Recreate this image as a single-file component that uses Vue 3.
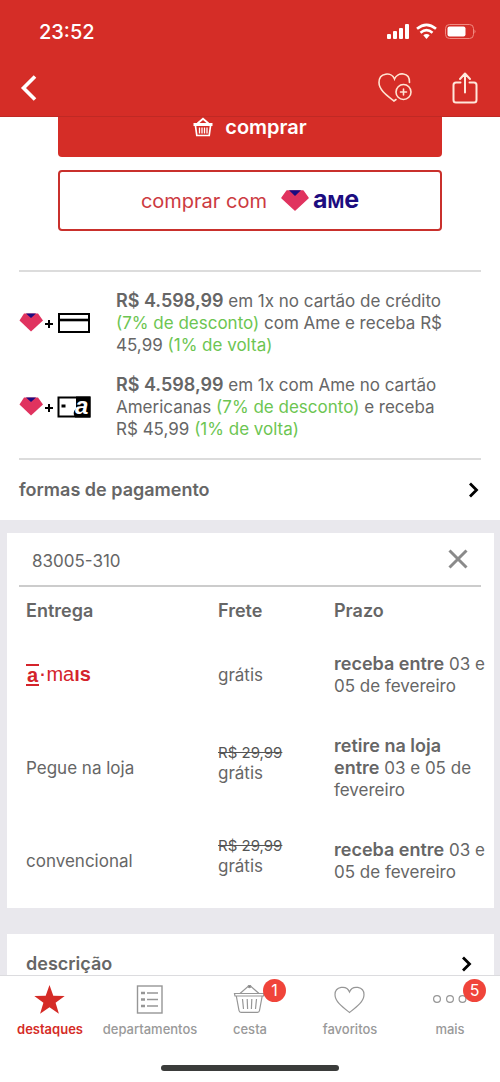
<script setup>
import { ref } from 'vue'

const cep = ref('83005-310')

const payments = [
  { id: 'credit', price: 'R$ 4.598,99', a: ' em 1x no cartão de crédito ', off: '(7% de desconto)', b: ' com Ame e receba R$ 45,99 ', back: '(1% de volta)' },
  { id: 'store', price: 'R$ 4.598,99', a: ' em 1x com Ame no cartão Americanas ', off: '(7% de desconto)', b: ' e receba R$ 45,99 ', back: '(1% de volta)' },
]

const deliveries = [
  { id: 'amais', name: '', old: '', strong: 'receba entre', rest: ' 03 e 05 de fevereiro' },
  { id: 'loja', name: 'Pegue na loja', old: 'R$ 29,99', strong: 'retire na loja entre', rest: ' 03 e 05 de fevereiro' },
  { id: 'conv', name: 'convencional', old: 'R$ 29,99', strong: 'receba entre', rest: ' 03 e 05 de fevereiro' },
]

const tabs = [
  { id: 'destaques', active: true },
  { id: 'departamentos' },
  { id: 'cesta', badge: 1 },
  { id: 'favoritos' },
  { id: 'mais', badge: 5 },
]
</script>

<template>
  <div class="app">
    <header class="top">
      <div class="status">
        <span class="time">23:52</span>
        <svg class="status-icons" width="90" height="18" viewBox="0 0 90 18" fill="#fff" aria-hidden="true">
          <rect x="1" y="11" width="4" height="5" rx="1" />
          <rect x="7" y="8" width="4" height="8" rx="1" />
          <rect x="13" y="5" width="4" height="11" rx="1" />
          <rect x="19" y="1" width="4" height="15" rx="1" />
          <g fill="none" stroke="#fff" stroke-width="2.6">
            <path d="M31 5.8Q40.500 -2.200 50 5.800" />
            <path d="M34.500 9.700Q40.500 4.600 46.500 9.700" />
          </g>
          <path d="M37.300 12.200Q40.500 9.600 43.700 12.200L40.500 16Z" />
          <rect x="59.500" y="1.500" width="28" height="14" rx="4" fill="none" stroke="#f08a80" />
          <rect x="61.500" y="3.500" width="18" height="10" rx="2" />
          <path d="M88.500 6.500q2 2 0 4z" fill="#f08a80" />
        </svg>
      </div>
      <div class="bar">
        <button class="icon-btn back" aria-label="voltar">
          <svg width="18" height="28" viewBox="0 0 18 28" fill="none" stroke="#fff" stroke-width="3.6"><path d="M16 2.500L4.500 14L16 25.500" /></svg>
        </button>
        <div class="bar-actions">
          <button class="icon-btn" aria-label="adicionar aos favoritos">
            <svg width="36" height="32" viewBox="0 0 36 32" fill="none" stroke="#ffe4d2" stroke-width="1.600" stroke-linecap="round">
              <path d="M31.500 10.500C32 0 19.500 -.5 16.500 7C13.500 -.5 1 .5 1 10.500C1 18 9 23.500 16 29L18 27.500" />
              <circle cx="25.500" cy="20" r="7.500" />
              <path d="M25.500 17v6M22.500 20h6" />
            </svg>
          </button>
          <button class="icon-btn" aria-label="compartilhar">
            <svg width="26" height="32" viewBox="0 0 26 32" fill="none" stroke="#ffe8dc" stroke-width="2" stroke-linecap="round" stroke-linejoin="round">
              <path d="M8.500 10.500H4q-2.500 0-2.500 2.500v15q0 2.500 2.500 2.500h18q2.500 0 2.500-2.500v-15q0-2.500-2.500-2.500h-4.500M13 20.500V2M8 7l5-5.500L18 7" />
            </svg>
          </button>
        </div>
      </div>
    </header>

    <main class="content">
      <section class="offer">
        <div class="buy">
          <button class="buy-btn">
            <svg width="20" height="20" viewBox="0 0 20 20" fill="none" stroke="#fff" aria-hidden="true">
              <path d="M4.500 6.500L10 1.800L15.500 6.500" stroke-width="1.800" />
              <path d="M0.500 6h19v3H.5z" fill="#fff" stroke="none" />
              <path d="M2.500 9l1.300 9.500h12.400L17.500 9" stroke-width="1.700" />
              <path d="M6.500 10.500v6M9 10.500v6M11.500 10.500v6M14 10.500v6" stroke-width="1.300" />
            </svg>
            comprar
          </button>
          <button class="ame-btn">
            <span>comprar com</span>
            <span class="ame-logo">
              <svg width="28" height="21" viewBox="0 0 28 21" aria-hidden="true">
                <path d="M6 1h16L27 8L14 20L1 8Z" fill="#e0335f" stroke="#e0335f" stroke-width="1.500" stroke-linejoin="round" />
                <path d="M8 .2h12L14 6Z" fill="#1c0c80" />
              </svg>
              <span class="ame-word">a<span class="ame-m">M</span>e</span>
            </span>
          </button>
        </div>

        <ul class="payments">
          <li v-for="p in payments" :key="p.id" class="payment">
            <svg width="72" height="24" viewBox="0 0 72 24" aria-hidden="true">
              <path d="M5 2.500h14L24 9.500L12 20.500L0.500 9.500Z" fill="#e0335f" />
              <path d="M7 2.500h10L12 7Z" fill="#1c0c80" />
              <path d="M30 9v8M26 13h8" stroke="#000" stroke-width="2" />
              <template v-if="p.id === 'credit'">
                <rect x="40" y="3" width="30" height="18" fill="#fff" stroke="#000" stroke-width="2" />
                <path d="M40 9h30" stroke="#000" stroke-width="2.600" />
              </template>
              <template v-else>
                <rect x="39.500" y="2.500" width="31" height="19" fill="#fff" stroke="#000" stroke-width="2" />
                <path d="M57 1.500h14.500v21H56q-3-5 1-9z" fill="#000" />
                <rect x="42.500" y="9.500" width="4" height="3" />
                <text x="56" y="19" class="card-a">a</text>
              </template>
            </svg>
            <p><strong>{{ p.price }}</strong>{{ p.a }}<span class="green">{{ p.off }}</span>{{ p.b }}<span class="green">{{ p.back }}</span></p>
          </li>
        </ul>

        <button class="link-row">
          formas de pagamento
          <svg width="12" height="18" viewBox="0 0 12 18" fill="none" stroke="#000" stroke-width="2.800"><path d="M1 2.500L7.500 9L1 15.500" /></svg>
        </button>
      </section>

      <section class="card">
        <div class="cep">
          <input v-model="cep" aria-label="CEP" inputmode="numeric" />
          <button class="icon-btn" aria-label="limpar CEP" @click="cep = ''">
            <svg width="20" height="20" viewBox="0 0 20 20" fill="none" stroke="#8a8a8a" stroke-width="3"><path d="M1.500 1.500l17 17M18.500 1.500l-17 17" /></svg>
          </button>
        </div>
        <table class="shipping">
          <thead>
            <tr><th scope="col">Entrega</th><th scope="col">Frete</th><th scope="col">Prazo</th></tr>
          </thead>
          <tbody>
            <tr v-for="d in deliveries" :key="d.id">
              <td>
                <span v-if="!d.name" class="amais"><b class="barred">a</b><b class="dot">·</b>ma<b>ıs</b></span>
                <template v-else>{{ d.name }}</template>
              </td>
              <td :class="{ discounted: d.old }"><s v-if="d.old">{{ d.old }}</s><span class="free">grátis</span></td>
              <td><strong>{{ d.strong }}</strong>{{ d.rest }}</td>
            </tr>
          </tbody>
        </table>
      </section>

      <section class="card">
        <button class="link-row inset">
          descrição
          <svg width="12" height="18" viewBox="0 0 12 18" fill="none" stroke="#000" stroke-width="2.800"><path d="M1 2.500L7.500 9L1 15.500" /></svg>
        </button>
      </section>
    </main>

    <nav class="tabbar">
      <div class="tabs">
        <a v-for="t in tabs" :key="t.id" :href="'#' + t.id" class="tab" :class="{ active: t.active }">
          <span class="tab-icon">
            <svg width="34" height="30" viewBox="0 0 34 30" fill="none" stroke="#969696" stroke-width="1.200" aria-hidden="true">
              <path v-if="t.id === 'destaques'" fill="#d52b26" stroke="none" d="M16.500 0l3.800 10.700 11.400.2-9.100 6.900 3.300 10.900L16.500 22.200l-9.400 6.500 3.300-10.900-9.100-6.900 11.400-.2z" />
              <g v-else-if="t.id === 'departamentos'">
                <rect x="4.500" y="1" width="24.500" height="27" stroke-width="1.400" />
                <path d="M8 8h4M8 14.500h4M8 21h4" stroke-width="2.600" />
                <path d="M14 8h11M14 14.500h11M14 21h11" stroke-width="1.300" />
              </g>
              <g v-else-if="t.id === 'cesta'">
                <path d="M1.500 8.500h29.500l-.5 2.500H2zM3.300 11L6 25.500q.3 1.800 2 1.800h16.500q1.700 0 2-1.800l2.700-14.500M7 8.500L15.500 1h2L26 8.500" />
                <circle cx="16.500" cy="1.500" r="1.200" fill="#777" />
                <path d="M9.500 14l1 10M14.200 14l.4 10M18.800 14l-.4 10M23.500 14l-1 10" />
              </g>
              <path v-else-if="t.id === 'favoritos'" d="M16.500 27.500C9.500 22 2 16.500 2 9.700C2 1.500 13.500 -.5 16.500 7C19.500 -.5 31 1.500 31 9.700C31 16.500 23.500 22 16.500 27.500Z" />
              <g v-else>
                <circle cx="4" cy="14" r="3.400" /><circle cx="17" cy="14" r="3.400" /><circle cx="29.500" cy="14" r="3.400" />
              </g>
            </svg>
            <span v-if="t.badge" class="badge">{{ t.badge }}</span>
          </span>
          <span>{{ t.id }}</span>
        </a>
      </div>
      <div class="home"></div>
    </nav>
  </div>
</template>

<style>
body { margin: 0; background: #fff; }
</style>

<style scoped>
.app {
  height: 100vh;
  display: flex;
  flex-direction: column;
  font-family: Inter, "Liberation Sans", sans-serif;
  font-size: 17px;
  line-height: 22px;
  color: #666;
  background: #e9e8ed;
}
button, input { font: inherit; color: inherit; border: 0; background: none; padding: 0; margin: 0; }
button { cursor: pointer; }
svg { display: block; flex: none; }
strong, th { font-size: 18px; font-weight: 600; }
strong { line-height: 20px; }

.top { background: #d52d27; border-bottom: 1px solid #bf2924; flex: none; }
.status { display: flex; justify-content: space-between; align-items: center; height: 64px; padding: 0 24px 0 39px; }
.time { color: #fff; font-size: 20px; font-weight: 500; }
.bar { display: flex; justify-content: space-between; align-items: center; height: 48px; padding: 0 22px 4px 19px; }
.bar-actions { display: flex; gap: 38px; }
.icon-btn { display: flex; align-items: center; }

.content { flex: 1; min-height: 0; overflow-y: auto; scrollbar-width: none; }
.offer { background: #fff; padding: 0 19px; }
.buy { display: flex; flex-direction: column; gap: 13px; padding: 0 39px 39px; margin-top: -20px; }
.buy-btn, .ame-btn { display: flex; align-items: center; justify-content: center; height: 61px; border-radius: 4px; font-size: 20px; }
.buy-btn { gap: 12px; height: 60px; background: #d52d27; color: #fff; font-weight: 600; line-height: 20px; }
.ame-btn { gap: 14px; border: 2px solid #c9302c; color: #cc3a41; }
.ame-logo { display: flex; align-items: center; gap: 4px; }
.ame-word { color: #1c0c80; font-size: 25px; font-weight: 700; }
.ame-m { font-size: 18px; }

.payments { list-style: none; margin: 0; padding: 18px 30px 18px 0; border-top: 2px solid #dcdcdc; border-bottom: 2px solid #dcdcdc; display: flex; flex-direction: column; gap: 18px; }
.payment { display: grid; grid-template-columns: 72px 1fr; gap: 25px; align-items: center; }
.payment p { margin: 0; }
.green { color: #6cc551; }
.card-a { font: italic 700 24px "Liberation Sans", sans-serif; fill: #fff; }

.link-row { display: flex; justify-content: space-between; align-items: center; width: 100%; height: 60px; font-size: 18px; font-weight: 600; text-align: left; }
.inset { padding: 0 20px 0 19px; }

.card { background: #fff; margin: 13px 6px 26px 7px; padding-bottom: 6px; }
.cep { display: flex; align-items: center; justify-content: space-between; height: 52px; margin: 0 13px 0 12px; padding: 0 13px; border-bottom: 2px solid #ccc; }
.cep input { flex: 1; min-width: 0; font-size: 17px; outline: none; padding-top: 4px; }

.shipping { width: 100%; border-collapse: collapse; table-layout: fixed; text-align: left; }
.shipping td { padding: 19px 6px 19px 0; vertical-align: middle; }
.shipping th { padding: 13px 0 12px; }
.shipping th:first-child { width: 211px; }
.shipping th:nth-child(2) { width: 116px; }
.shipping th:first-child, .shipping td:first-child { padding-left: 19px; box-sizing: border-box; }
.shipping .discounted { padding-top: 14px; padding-bottom: 24px; }
.shipping s, .free { display: block; line-height: 20px; }
.shipping s { font-size: 15px; color: #555; }
.amais { display: inline-flex; align-items: center; font: 20px "Liberation Sans", sans-serif; color: #d4232b; }
.amais b { font-weight: 700; }
.amais .barred { border-top: 2px solid; border-bottom: 2px solid; line-height: 18px; padding: 0 1px; }
.amais .dot { font-size: 16px; padding: 0 1px; }

.tabbar { flex: none; background: #fff; border-top: 1px solid #dcdcdf; }
.tabs { display: flex; padding-top: 9px; }
.tab { flex: 1; display: flex; flex-direction: column; align-items: center; gap: 3px; color: #999; font-size: 13px; font-weight: 500; text-decoration: none; }
.active { color: #d52b26; font-weight: 600; }
.tab-icon { position: relative; }
.badge { position: absolute; left: 30px; top: -6px; width: 23px; height: 23px; border-radius: 50%; background: #f0443a; color: #fff; font-size: 16px; font-weight: 400; line-height: 23px; text-align: center; }
.home { width: 178px; height: 6px; border-radius: 3px; background: #3b3c3b; margin: 25px auto 11px; }
</style>
